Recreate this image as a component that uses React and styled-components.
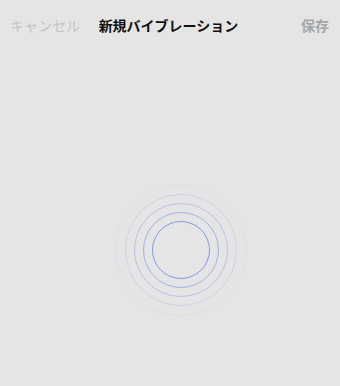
import React from "react";
import styled, { createGlobalStyle } from "styled-components";

const Global = createGlobalStyle`
  html, body { margin: 0; padding: 0; background: #e5e5e5; }
  body { font-family: "Noto Sans CJK JP", "Noto Sans", sans-serif; }
`;

const Screen = styled.div`
  width: 340px;
  height: 386px;
  display: flex;
  flex-direction: column;
  background: #e5e5e5;
  overflow: hidden;
`;

const NavBar = styled.div`
  height: 50px;
  display: grid;
  grid-template-columns: 1fr auto 1fr;
  align-items: center;
  padding: 0 11px 0 10px;
  box-sizing: border-box;
`;

const NavButton = styled.span`
  font-size: 14px;
  line-height: 1;
  color: ${(p) => p.$color};
  font-weight: ${(p) => p.$weight};
  justify-self: ${(p) => p.$align};
  margin-top: -1px;
`;

const Title = styled.span`
  font-size: 14px;
  line-height: 1;
  font-weight: 700;
  color: #111;
  margin-top: -1px;
  margin-left: -2px;
`;

const Body = styled.div`
  flex: 1;
  display: flex;
  justify-content: center;
  align-items: center;
  padding: 64px 0 0 22px;
`;

const Rings = styled.div`
  position: relative;
  width: 132px;
  height: 132px;
`;

const Ring = styled.div`
  position: absolute;
  left: 50%;
  top: 50%;
  width: ${(p) => p.$r * 2}px;
  height: ${(p) => p.$r * 2}px;
  margin-left: ${(p) => -p.$r}px;
  margin-top: ${(p) => -p.$r}px;
  border-radius: 50%;
  border: 1px solid ${(p) => p.$color};
  box-sizing: border-box;
`;

const rings = [
  { r: 66, color: "rgba(205, 210, 225, 0.3)" },
  { r: 56, color: "rgba(160, 175, 225, 0.35)" },
  { r: 47, color: "rgba(130, 150, 225, 0.45)" },
  { r: 38, color: "rgba(110, 135, 225, 0.55)" },
  { r: 29, color: "rgba(90, 120, 225, 0.7)" },
];

export default function App() {
  return (
    <Screen>
      <Global />
      <NavBar>
        <NavButton $color="#c4c4c4" $weight={400} $align="start">キャンセル</NavButton>
        <Title>新規バイブレーション</Title>
        <NavButton $color="#a6a6a6" $weight={700} $align="end">保存</NavButton>
      </NavBar>
      <Body>
        <Rings>
          {rings.map((g) => (
            <Ring key={g.r} $r={g.r} $color={g.color} />
          ))}
        </Rings>
      </Body>
    </Screen>
  );
}
